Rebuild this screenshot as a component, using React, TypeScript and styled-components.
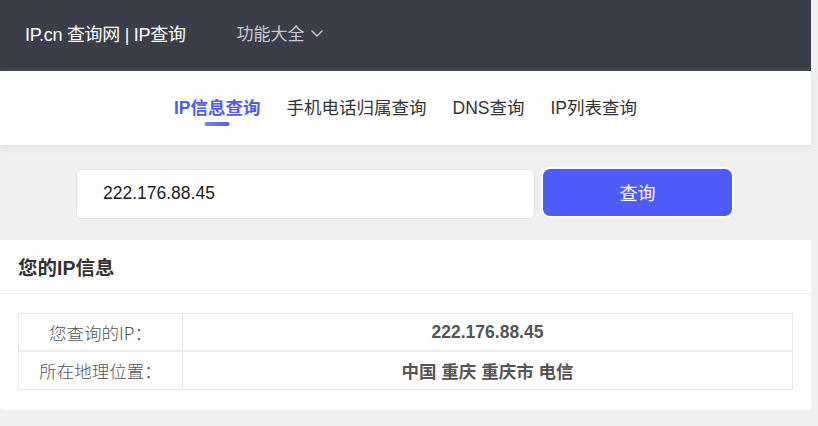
import React from "react";
import styled, { createGlobalStyle } from "styled-components";

const Global = createGlobalStyle`
  html, body { margin: 0; padding: 0; background: #f0f0f0; }
  body { font-family: "Liberation Sans", "Noto Sans CJK SC", Arial, sans-serif; }
  * { box-sizing: border-box; }
`;

const Page = styled.div`
  width: 811px;
  display: flex;
  flex-direction: column;
`;

const Header = styled.header`
  height: 71px;
  background: #3b3e48;
  display: flex;
  align-items: center;
  padding-left: 25px;
  padding-bottom: 6px;
`;

const Brand = styled.div`
  color: #ffffff;
  font-size: 18px;
  letter-spacing: -0.3px;
`;

const Menu = styled.div`
  margin-left: 51px;
  color: #c9cbd0;
  font-size: 17px;
  display: flex;
  align-items: center;
  gap: 5px;
`;

const Nav = styled.nav`
  height: 74px;
  background: #ffffff;
  display: flex;
  justify-content: center;
  align-items: center;
  gap: 26px;
  box-shadow: 0 2px 6px rgba(200, 205, 225, 0.45);
  position: relative;
  z-index: 1;
`;

const Tab = styled.div<{ $active?: boolean }>`
  position: relative;
  font-size: 17.5px;
  color: ${(p) => (p.$active ? "#4f5de6" : "#333333")};
  font-weight: ${(p) => (p.$active ? 700 : 400)};
  line-height: 24px;
  &::after {
    content: "";
    display: ${(p) => (p.$active ? "block" : "none")};
    position: absolute;
    left: 50%;
    transform: translateX(-50%);
    bottom: -6px;
    width: 25px;
    height: 4px;
    border-radius: 2px;
    background: linear-gradient(90deg, #7886f5, #4f5de6);
  }
`;

const SearchArea = styled.section`
  height: 95px;
  display: flex;
  align-items: center;
  padding-left: 76px;
  gap: 6px;
  padding-top: 2px;
`;

const Input = styled.div`
  width: 459px;
  height: 50px;
  background: #ffffff;
  border: 1px solid #e2e2e2;
  border-radius: 6px;
  display: flex;
  align-items: center;
  padding-left: 26px;
  font-size: 17.5px;
  color: #222222;
`;

const Button = styled.button`
  width: 193px;
  height: 51px;
  margin-top: -3px;
  border: 2px solid #ffffff;
  border-radius: 9px;
  background: #4f5bfb;
  color: #ffffff;
  font-family: "Noto Sans CJK SC", sans-serif;
  font-size: 18px;
  padding: 0;
`;

const Card = styled.section`
  background: #ffffff;
  border-radius: 0 0 4px 4px;
  height: 170px;
  display: flex;
  flex-direction: column;
`;

const CardTitle = styled.h2`
  margin: 0;
  height: 54px;
  padding-left: 18px;
  padding-bottom: 1px;
  display: flex;
  align-items: center;
  font-size: 19.5px;
  font-weight: 700;
  color: #333333;
  border-bottom: 1px solid #eeeeee;
`;

const Table = styled.div`
  margin: 19px 18px 0 18px;
  border: 1px solid #e8e8e8;
  display: flex;
  flex-direction: column;
`;

const Row = styled.div<{ $last?: boolean }>`
  display: grid;
  grid-template-columns: 164px 1fr;
  height: ${(p) => (p.$last ? "37px" : "38px")};
  border-bottom: ${(p) => (p.$last ? "none" : "2px solid #ebebeb")};
`;

const Label = styled.div`
  border-right: 1px solid #e8e8e8;
  display: flex;
  align-items: center;
  justify-content: center;
  font-size: 17.5px;
  color: #555555;
  font-family: "Noto Sans CJK SC", sans-serif;
  font-weight: 300;
`;

const Value = styled.div`
  display: flex;
  align-items: center;
  justify-content: center;
  font-size: 17.5px;
  font-weight: 700;
  color: #555555;
`;

const Chevron = () => (
  <svg width="14" height="10" viewBox="0 0 14 10" fill="none">
    <path d="M1.5 2.5 L7 8 L12.5 2.5" stroke="#c9cbd0" strokeWidth="1.4" />
  </svg>
);

export default function App() {
  return (
    <>
      <Global />
      <Page>
        <Header>
          <Brand>IP.cn 查询网 | IP查询</Brand>
          <Menu>
            功能大全 <Chevron />
          </Menu>
        </Header>
        <Nav>
          <Tab $active>IP信息查询</Tab>
          <Tab>手机电话归属查询</Tab>
          <Tab>DNS查询</Tab>
          <Tab>IP列表查询</Tab>
        </Nav>
        <SearchArea>
          <Input>222.176.88.45</Input>
          <Button>查询</Button>
        </SearchArea>
        <Card>
          <CardTitle>您的IP信息</CardTitle>
          <Table>
            <Row>
              <Label>您查询的IP：</Label>
              <Value>222.176.88.45</Value>
            </Row>
            <Row $last>
              <Label>所在地理位置：</Label>
              <Value>中国 重庆 重庆市 电信</Value>
            </Row>
          </Table>
        </Card>
      </Page>
    </>
  );
}
